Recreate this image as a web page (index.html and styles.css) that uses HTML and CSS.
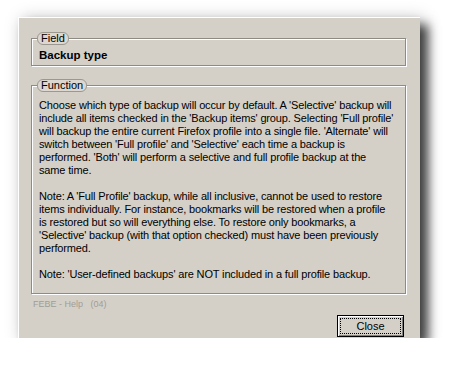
FILE: index.html
```html
<!DOCTYPE html>
<html lang="en">
<head>
    <meta charset="UTF-8">
    <title>FEBE - Help</title>
    <link rel="stylesheet" href="styles.css">
</head>
<body>
    <div class="dialog">
        <fieldset class="group field-group">
            <legend>Field</legend>
            <div class="field-name">Backup type</div>
        </fieldset>

        <fieldset class="group function-group">
            <legend>Function</legend>
            <p>Choose which type of backup will occur by default. A 'Selective' backup will<br>
            include all items checked in the 'Backup items' group. Selecting 'Full profile'<br>
            will backup the entire current Firefox profile into a single file. 'Alternate' will<br>
            switch between 'Full profile' and 'Selective' each time a backup is<br>
            performed. 'Both' will perform a selective and full profile backup at the<br>
            same time.</p>
            <p>Note: A 'Full Profile' backup, while all inclusive, cannot be used to restore<br>
            items individually. For instance, bookmarks will be restored when a profile<br>
            is restored but so will everything else. To restore only bookmarks, a<br>
            'Selective' backup (with that option checked) must have been previously<br>
            performed.</p>
            <p>Note: 'User-defined backups' are NOT included in a full profile backup.</p>
        </fieldset>

        <div class="footer">FEBE - Help &nbsp;&nbsp;(04)</div>

        <div class="buttons">
            <button class="close-button"><span>Close</span></button>
        </div>
    </div>
</body>
</html>
```

FILE: styles.css
```css
body {
    margin: 0;
    background-color: #fff;
    font-family: 'Liberation Sans', Arial, sans-serif;
    font-size: 11px;
    color: #000;
}

.dialog {
    margin: 17px 0 0 18px;
    width: 402px;
    height: 321px;
    box-sizing: border-box;
    padding: 14px 14px 0 12px;
    background-color: #d4d0c8;
    border-top: 1px solid #fff;
    border-left: 1px solid #fff;
    box-shadow: 8px 8px 10px rgba(0, 0, 0, 0.7), 4px 2px 16px rgba(0, 0, 0, 0.25);
    display: flex;
    flex-direction: column;
}

.group {
    margin: 0;
    padding: 0 0 0 7px;
    border: 1px solid #8e8b85;
    box-shadow: inset 1px 1px 0 #fff, 1px 1px 0 #fff;
}

.group legend {
    padding: 0 3px;
    margin-left: -2px;
    border: 1px solid #9c9890;
    border-radius: 6px;
    background-color: #dcd8d1;
    line-height: 11px;
}

.field-group {
    height: 34px;
    box-sizing: border-box;
}

.field-name {
    font-weight: bold;
    font-size: 11.5px;
    padding-top: 4px;
}

.function-group {
    margin-top: 13px;
    height: 215px;
    box-sizing: border-box;
}

.function-group p {
    margin: 7px 0 13px 0;
    line-height: 13px;
    white-space: nowrap;
    letter-spacing: -0.15px;
}

.function-group p + p {
    margin-top: 0;
}

.footer {
    margin-top: 5px;
    padding-left: 2px;
    font-size: 9px;
    color: #a19d96;
}

.buttons {
    display: flex;
    justify-content: flex-end;
    margin-top: auto;
    padding-right: 2px;
    padding-bottom: 1px;
}

.close-button {
    width: 67px;
    height: 22px;
    padding: 2px;
    font-family: inherit;
    font-size: 11px;
    color: #000;
    background-color: #d4d0c8;
    border: 1px solid #000;
    box-shadow: inset 1px 1px 0 #fff, inset -1px -1px 0 #808080;
}

.close-button span {
    display: block;
    height: 100%;
    box-sizing: border-box;
    border: 1px dotted #000;
    line-height: 14px;
}
```
